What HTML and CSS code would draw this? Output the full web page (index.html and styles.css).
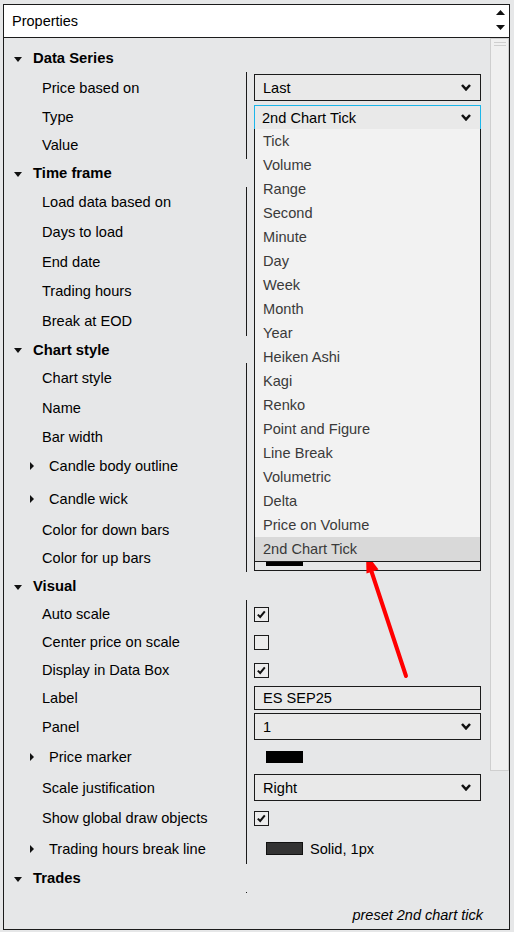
FILE: index.html
```html
<!DOCTYPE html>
<html>
<head>
<meta charset="utf-8">
<title>Properties</title>
<link rel="stylesheet" href="styles.css">
</head>
<body>
<div class="window">
  <div class="titlebar">
    <span class="title">Properties</span>
    <svg class="spin" width="19" height="32" viewBox="0 0 19 32">
      <polygon points="6,10 10.5,5 15,10" fill="#111"/>
      <polygon points="6,20 15,20 10.5,25" fill="#111"/>
    </svg>
  </div>
  <div class="content">
    <div class="list">
      <div class="group">
        <div class="ghead h28"><span class="tri-down"></span><span>Data Series</span></div>
        <div class="row h31"><div class="lbl">Price based on</div><div class="val"><div class="select"><span>Last</span><svg class="chev" width="10" height="7" viewBox="0 0 10 7"><polyline points="1,1 5,5.4 9,1"/></svg></div></div></div>
        <div class="row h28"><div class="lbl">Type</div><div class="val"><div class="select focus"><span>2nd Chart Tick</span><svg class="chev" width="10" height="7" viewBox="0 0 10 7"><polyline points="1,1 5,5.4 9,1"/></svg>
          <ul class="droplist">
            <li>Tick</li><li>Volume</li><li>Range</li><li>Second</li><li>Minute</li><li>Day</li><li>Week</li><li>Month</li><li>Year</li><li>Heiken Ashi</li><li>Kagi</li><li>Renko</li><li>Point and Figure</li><li>Line Break</li><li>Volumetric</li><li>Delta</li><li>Price on Volume</li><li class="sel">2nd Chart Tick</li>
          </ul>
        </div></div></div>
        <div class="row h28"><div class="lbl">Value</div><div class="val"></div></div>
      </div>
      <div class="group">
        <div class="ghead h28"><span class="tri-down"></span><span>Time frame</span></div>
        <div class="row h30"><div class="lbl">Load data based on</div><div class="val"></div></div>
        <div class="row h30"><div class="lbl">Days to load</div><div class="val"></div></div>
        <div class="row h29"><div class="lbl">End date</div><div class="val"></div></div>
        <div class="row h30"><div class="lbl">Trading hours</div><div class="val"></div></div>
        <div class="row h30"><div class="lbl">Break at EOD</div><div class="val"></div></div>
      </div>
      <div class="group">
        <div class="ghead h27"><span class="tri-down"></span><span>Chart style</span></div>
        <div class="row h30"><div class="lbl">Chart style</div><div class="val"></div></div>
        <div class="row h30"><div class="lbl">Name</div><div class="val"></div></div>
        <div class="row h27"><div class="lbl">Bar width</div><div class="val"></div></div>
        <div class="row h32"><div class="lbl sub"><span class="tri-right"></span><span>Candle body outline</span></div><div class="val"></div></div>
        <div class="row h33"><div class="lbl sub"><span class="tri-right"></span><span>Candle wick</span></div><div class="val"></div></div>
        <div class="row h29"><div class="lbl">Color for down bars</div><div class="val"></div></div>
        <div class="row h28"><div class="lbl">Color for up bars</div><div class="val"><div class="colorbox"><span class="swatch black"></span></div></div></div>
      </div>
      <div class="group">
        <div class="ghead h28"><span class="tri-down"></span><span>Visual</span></div>
        <div class="row h28"><div class="lbl">Auto scale</div><div class="val"><span class="check on"><svg width="13" height="13" viewBox="0 0 13 13"><polyline points="2.8,6.6 5.2,9 9.8,3.4"/></svg></span></div></div>
        <div class="row h28"><div class="lbl">Center price on scale</div><div class="val"><span class="check"></span></div></div>
        <div class="row h28"><div class="lbl">Display in Data Box</div><div class="val"><span class="check on"><svg width="13" height="13" viewBox="0 0 13 13"><polyline points="2.8,6.6 5.2,9 9.8,3.4"/></svg></span></div></div>
        <div class="row h28"><div class="lbl">Label</div><div class="val"><div class="textbox">ES SEP25</div></div></div>
        <div class="row h29"><div class="lbl">Panel</div><div class="val"><div class="select"><span>1</span><svg class="chev" width="10" height="7" viewBox="0 0 10 7"><polyline points="1,1 5,5.4 9,1"/></svg></div></div></div>
        <div class="row h31"><div class="lbl sub"><span class="tri-right"></span><span>Price marker</span></div><div class="val"><span class="swatch black"></span></div></div>
        <div class="row h31"><div class="lbl">Scale justification</div><div class="val"><div class="select"><span>Right</span><svg class="chev" width="10" height="7" viewBox="0 0 10 7"><polyline points="1,1 5,5.4 9,1"/></svg></div></div></div>
        <div class="row h30"><div class="lbl">Show global draw objects</div><div class="val"><span class="check on"><svg width="13" height="13" viewBox="0 0 13 13"><polyline points="2.8,6.6 5.2,9 9.8,3.4"/></svg></span></div></div>
        <div class="row h31"><div class="lbl sub"><span class="tri-right"></span><span>Trading hours break line</span></div><div class="val"><span class="swatch dark"></span><span class="swtext">Solid, 1px</span></div></div>
      </div>
      <div class="group">
        <div class="ghead h28"><span class="tri-down"></span><span>Trades</span></div>
        <div class="row h30"><div class="lbl"></div><div class="val"></div></div>
      </div>
    </div>
    <div class="scrollbar"><div class="thumb"><span class="grip"></span><span class="grip"></span></div></div>
  </div>
  <div class="footer">preset 2nd chart tick</div>
</div>
<svg class="annot" width="514" height="932" viewBox="0 0 514 932">
  <line x1="406" y1="676" x2="371" y2="570" stroke="#ff0000" stroke-width="4" stroke-linecap="round"/>
  <polygon points="366,553 378.5,569.5 366.5,573.5" fill="#ff0000"/>
</svg>
</body>
</html>
```
FILE: styles.css
```css
body {
  margin: 0;
  background: #e6e7e8;
  font-family: "Liberation Sans", Arial, sans-serif;
  font-size: 14.6px;
  color: #000;
  position: relative;
}

.window {
  margin: 4px 0 0 3px;
  width: 507px;
  height: 926px;
  box-sizing: border-box;
  border: 1px solid #1b1b1b;
  display: flex;
  flex-direction: column;
}

.titlebar {
  flex: none;
  height: 33px;
  box-sizing: border-box;
  border-bottom: 1px solid #1b1b1b;
  background: #fff;
  display: flex;
  align-items: center;
  justify-content: space-between;
  padding-left: 8px;
}

.title { font-size: 14.5px; }

.spin { display: block; }

.content {
  flex: none;
  height: 855px;
  display: flex;
}

.list {
  width: 486px;
  overflow: hidden;
  padding-top: 6px;
  box-sizing: border-box;
}

.scrollbar { width: 19px; }

.thumb {
  height: 733px;
  box-sizing: border-box;
  border: 1px solid #cfcfcf;
  background: #f0f0f0;
  padding: 3px 2px 0 3px;
  display: flex;
  flex-direction: column;
  gap: 2px;
}

.grip {
  display: block;
  height: 1px;
  background: #cfcfcf;
}

.h27 { height: 27px; }
.h28 { height: 28px; }
.h29 { height: 29px; }
.h30 { height: 30px; }
.h31 { height: 31px; }
.h32 { height: 32px; }
.h33 { height: 33px; }

.ghead {
  display: flex;
  align-items: center;
  padding-left: 10px;
  font-weight: bold;
  font-size: 14.8px;
}

.tri-down {
  width: 0;
  height: 0;
  border-left: 4.5px solid transparent;
  border-right: 4.5px solid transparent;
  border-top: 5px solid #111;
  margin: 2px 11px 0 0;
}

.tri-right {
  width: 0;
  height: 0;
  border-top: 4px solid transparent;
  border-bottom: 4px solid transparent;
  border-left: 4px solid #111;
  margin-right: 15px;
}

.row {
  display: grid;
  grid-template-columns: 242px 1fr;
}

.lbl {
  display: flex;
  align-items: center;
  padding-left: 38px;
  white-space: nowrap;
}

.lbl.sub { padding-left: 26px; }

.val {
  border-left: 1px solid #1b1b1b;
  padding-left: 7px;
  display: flex;
  align-items: center;
}

.select {
  position: relative;
  width: 227px;
  height: 27px;
  box-sizing: border-box;
  border: 1px solid #1b1b1b;
  background: #e9e9e9;
  display: flex;
  align-items: center;
  justify-content: space-between;
  padding: 0 9px 0 8px;
}

.select.focus {
  height: 25px;
  border-color: #1cb6ea;
  padding-left: 7px;
  align-self: flex-start;
  margin-top: 2px;
}

.chev { display: block; }
.chev polyline {
  fill: none;
  stroke: #111;
  stroke-width: 2.5;
}

.droplist {
  position: absolute;
  top: 100%;
  left: -1px;
  width: 227px;
  box-sizing: border-box;
  margin: 0;
  padding: 0;
  list-style: none;
  background: #f2f2f2;
  border: 1px solid #1b1b1b;
  border-top: none;
  z-index: 5;
  color: #3a3a3a;
}

.droplist li {
  height: 24px;
  line-height: 24px;
  padding-left: 8px;
}

.droplist li.sel { background: #d9d9d9; }

.colorbox {
  width: 227px;
  height: 23px;
  box-sizing: border-box;
  border: 1px solid #1b1b1b;
  display: flex;
  align-items: center;
  padding-left: 11px;
  margin-top: 3px;
}

.textbox {
  width: 227px;
  height: 24px;
  box-sizing: border-box;
  border: 1px solid #1b1b1b;
  background: #e9e9e9;
  display: flex;
  align-items: center;
  padding-left: 8px;
}

.check {
  width: 15px;
  height: 15px;
  box-sizing: border-box;
  border: 1px solid #1b1b1b;
  background: #ececec;
  display: flex;
  align-items: center;
  justify-content: center;
}

.check svg { display: block; }
.check polyline {
  fill: none;
  stroke: #111;
  stroke-width: 2;
}

.swatch {
  display: inline-block;
  width: 37px;
  height: 12px;
  box-sizing: border-box;
  margin-left: 12px;
}

.colorbox .swatch { margin-left: 0; }

.swatch.black { background: #000; }

.swatch.dark {
  background: #333;
  border: 1px solid #111;
  height: 13px;
}

.swtext { margin-left: 7px; }

.footer {
  flex: 1;
  display: flex;
  align-items: flex-end;
  justify-content: flex-end;
  padding: 0 26px 5px 0;
  font-style: italic;
  font-size: 14.5px;
  line-height: 17px;
}

.annot {
  position: absolute;
  left: 0;
  top: 0;
  pointer-events: none;
}
```
